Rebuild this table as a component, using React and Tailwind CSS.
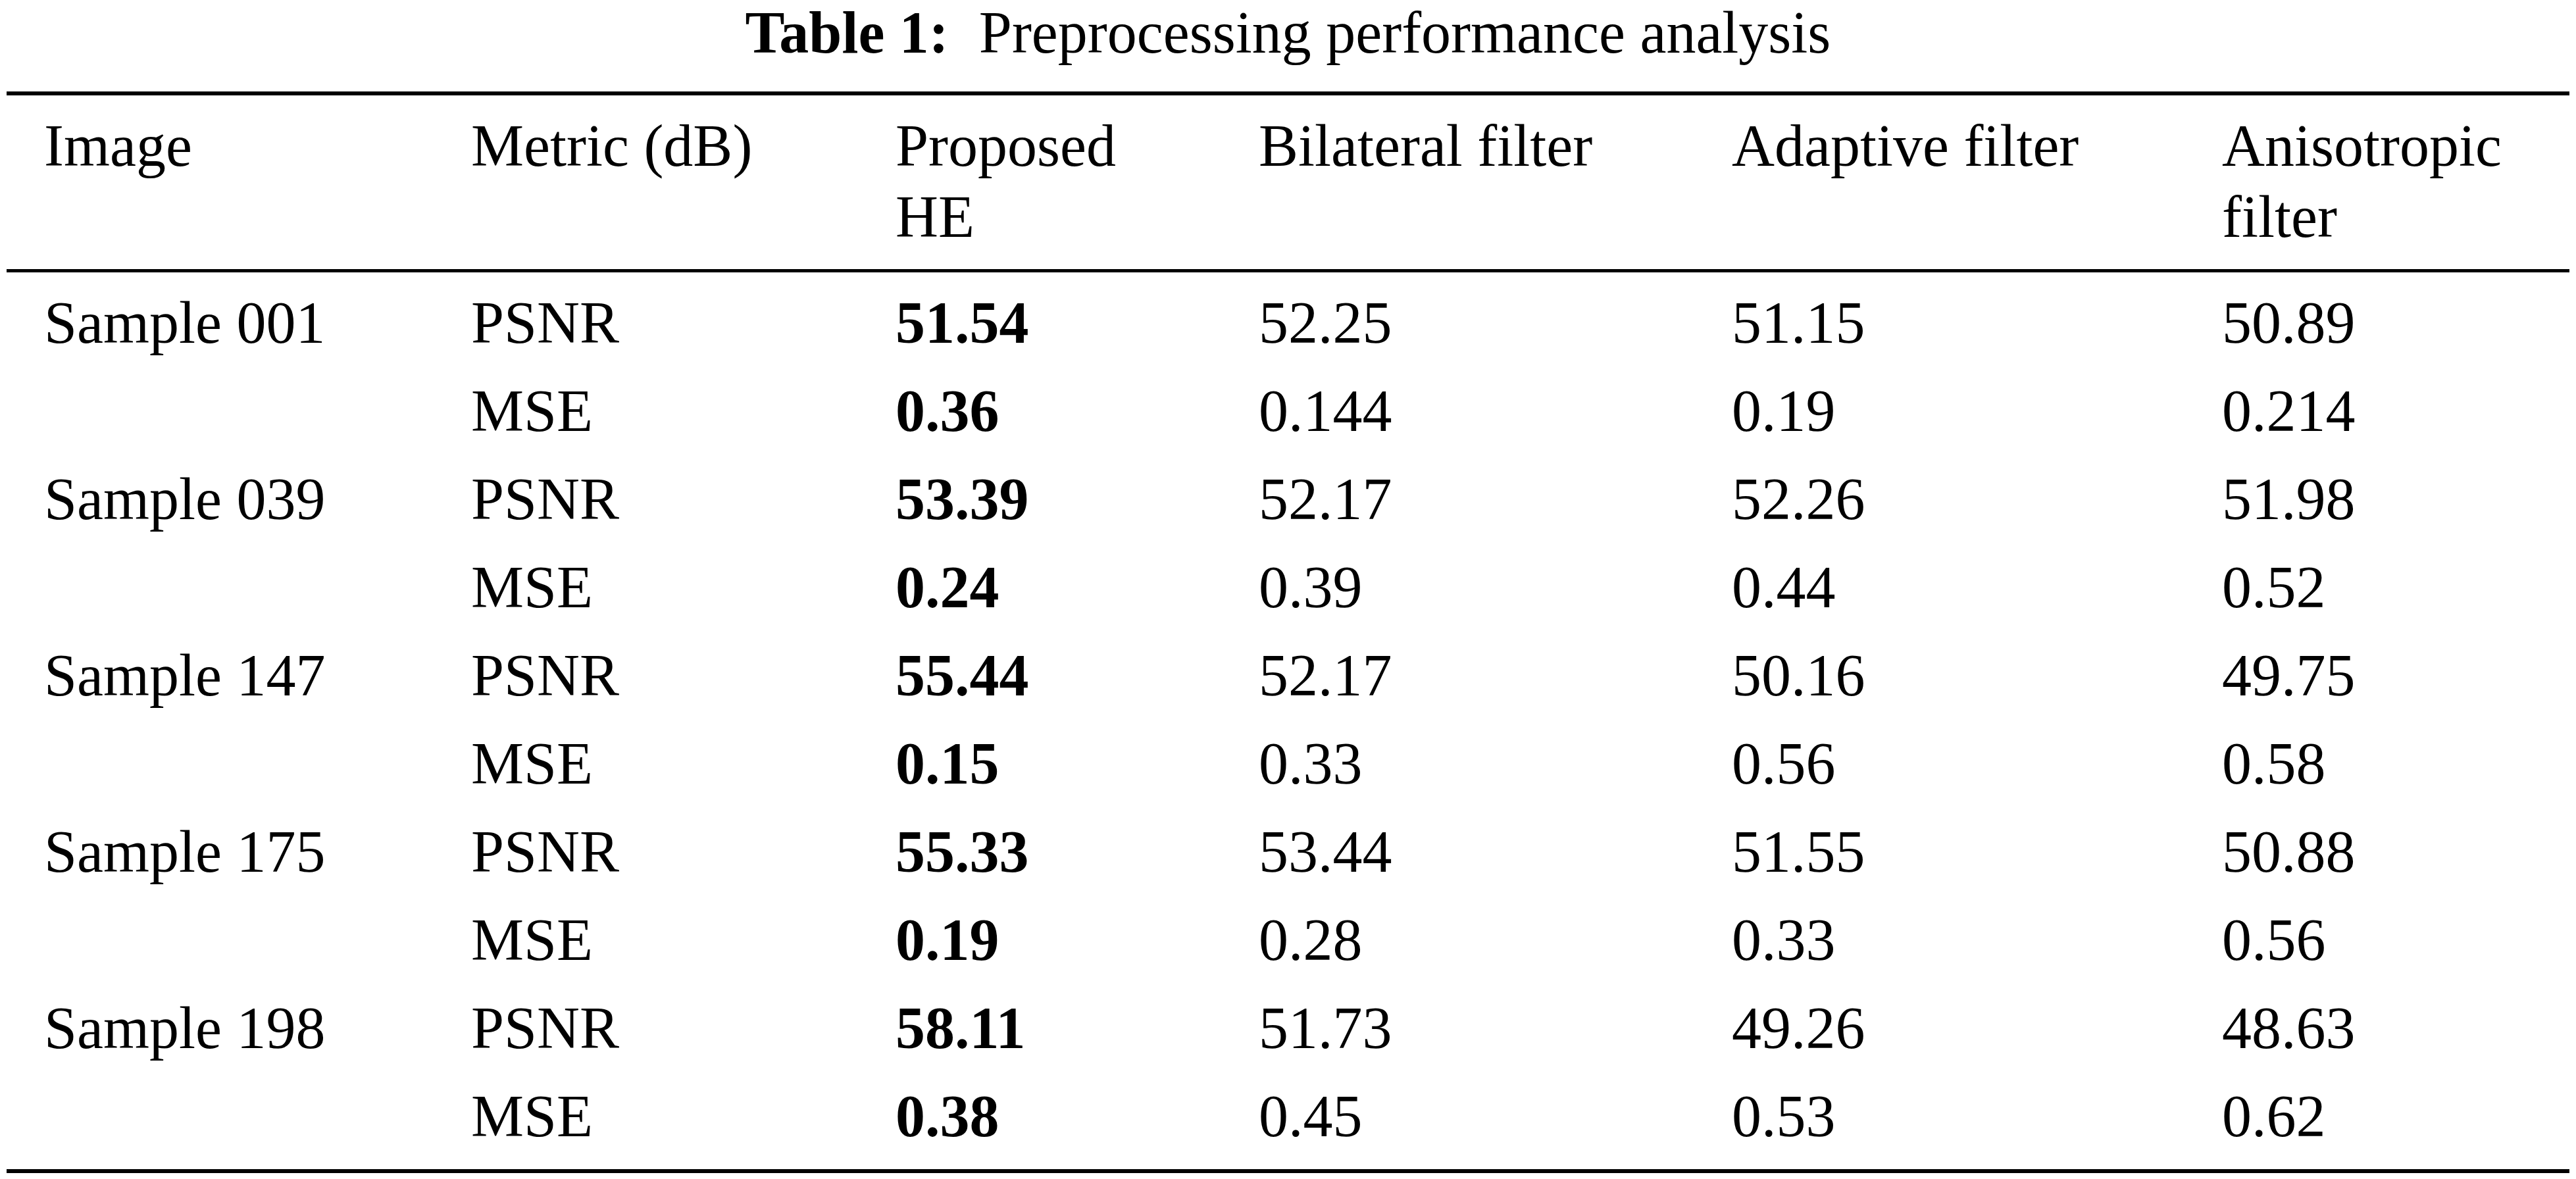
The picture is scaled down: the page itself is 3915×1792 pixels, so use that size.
import React from "react";

const rows = [
  { image: "Sample 001", metric: "PSNR", values: ["51.54", "52.25", "51.15", "50.89"] },
  { image: "", metric: "MSE", values: ["0.36", "0.144", "0.19", "0.214"] },
  { image: "Sample 039", metric: "PSNR", values: ["53.39", "52.17", "52.26", "51.98"] },
  { image: "", metric: "MSE", values: ["0.24", "0.39", "0.44", "0.52"] },
  { image: "Sample 147", metric: "PSNR", values: ["55.44", "52.17", "50.16", "49.75"] },
  { image: "", metric: "MSE", values: ["0.15", "0.33", "0.56", "0.58"] },
  { image: "Sample 175", metric: "PSNR", values: ["55.33", "53.44", "51.55", "50.88"] },
  { image: "", metric: "MSE", values: ["0.19", "0.28", "0.33", "0.56"] },
  { image: "Sample 198", metric: "PSNR", values: ["58.11", "51.73", "49.26", "48.63"] },
  { image: "", metric: "MSE", values: ["0.38", "0.45", "0.53", "0.62"] },
];

const headers = [
  "Image",
  "Metric (dB)",
  "Proposed HE",
  "Bilateral filter",
  "Adaptive filter",
  "Anisotropic filter",
];

const cols = "grid grid-cols-[649px_645px_552px_719px_745px_1fr]";

const App = () => {
  return (
    <div
      className="min-h-screen bg-white text-black"
      style={{ fontFamily: '"Liberation Serif", "Times New Roman", serif' }}
    >
      <div className="text-center text-[90px] leading-[100px] whitespace-nowrap">
        <span className="font-bold">Table 1:</span>
        <span className="ml-[46px]">Preprocessing performance analysis</span>
      </div>

      <div className="mx-[10px] mt-[39px]">
        <div className="h-[6px] bg-black"></div>

        <div className={`${cols} pt-[23px] pb-[25px] text-[90px] leading-[108px]`}>
          {headers.map((h) => (
            <div key={h} className="px-[57px]">
              {h}
            </div>
          ))}
        </div>

        <div className="h-[5px] bg-black"></div>

        <div className="pt-[10px] pb-[13px] text-[90px] leading-[134px]">
          {rows.map((r, i) => (
            <div key={i} className={cols}>
              <div className="px-[57px] whitespace-nowrap">{r.image}</div>
              <div className="px-[57px]">{r.metric}</div>
              <div className="px-[57px] font-bold">{r.values[0]}</div>
              <div className="px-[57px]">{r.values[1]}</div>
              <div className="px-[57px]">{r.values[2]}</div>
              <div className="px-[57px]">{r.values[3]}</div>
            </div>
          ))}
        </div>

        <div className="h-[6px] bg-black"></div>
      </div>
    </div>
  );
};

export default App;
